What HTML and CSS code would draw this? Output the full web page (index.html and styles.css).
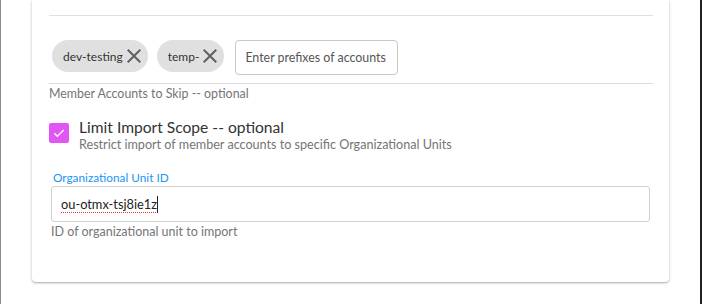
FILE: index.html
```html
<!DOCTYPE html>
<html lang="en">
<head>
    <meta charset="UTF-8">
    <meta name="viewport" content="width=device-width, initial-scale=1.0">
    <title>Import Accounts</title>
    <link rel="stylesheet" href="styles.css">
</head>
<body>
    <div class="frame">
        <div class="card">
            <div class="divider"></div>

            <!-- Cuentas a omitir -->
            <div class="chip-field">
                <div class="chips">
                    <span class="chip">dev-testing
                        <svg class="chip-close" viewBox="0 0 24 24"><path d="M19 6.41L17.59 5 12 10.59 6.41 5 5 6.41 10.59 12 5 17.59 6.41 19 12 13.41 17.59 19 19 17.59 13.41 12z"/></svg>
                    </span>
                    <span class="chip">temp-
                        <svg class="chip-close" viewBox="0 0 24 24"><path d="M19 6.41L17.59 5 12 10.59 6.41 5 5 6.41 10.59 12 5 17.59 6.41 19 12 13.41 17.59 19 19 17.59 13.41 12z"/></svg>
                    </span>
                    <input class="chip-input" type="text" placeholder="Enter prefixes of accounts">
                </div>
            </div>
            <p class="helper">Member Accounts to Skip -- optional</p>

            <!-- Limitar alcance -->
            <label class="check-row">
                <span class="checkbox">
                    <svg viewBox="0 0 24 24"><path d="M5 12.5l4.5 4.5L19 7.5" fill="none" stroke="#fff" stroke-width="2.2"/></svg>
                </span>
                <span class="check-text">
                    <span class="check-title">Limit Import Scope -- optional</span>
                    <span class="check-sub">Restrict import of member accounts to specific Organizational Units</span>
                </span>
            </label>

            <div class="field">
                <div class="field-label">Organizational Unit ID</div>
                <div class="field-box"><span class="typed">ou-otmx-tsj8ie1z</span><span class="caret"></span></div>
                <p class="helper">ID of organizational unit to import</p>
            </div>
        </div>
    </div>
</body>
</html>
```

FILE: styles.css
```css
body {
    font-family: Lato, 'Open Sans', sans-serif;
    background-color: #fff;
    color: #333;
    margin: 0;
    padding: 0;
}
.frame {
    height: 304px;
    border-left: 1px solid #8a8a8a;
    border-right: 2px solid #222;
    overflow: hidden;
}
.card {
    margin: 0 31px 0 31px;
    height: 282px;
    padding: 15px 16px 0 17px;
    box-sizing: border-box;
    background: #fff;
    border-radius: 0 0 4px 4px;
    box-shadow: 0 1px 3px rgba(0, 0, 0, 0.25), 0 1px 1px rgba(0, 0, 0, 0.12);
}
.divider {
    height: 1px;
    background: #e0e0e0;
}
.chip-field {
    margin-top: 24px;
    border-bottom: 1px solid #dcdcdc;
    padding-bottom: 8px;
}
.chips {
    display: flex;
    align-items: flex-start;
}
.chip {
    display: inline-flex;
    align-items: center;
    height: 32px;
    padding: 0 2px 0 11px;
    margin: 0 9px 0 3px;
    background: #e0e0e0;
    border-radius: 16px;
    font-size: 12px;
    color: #333;
}
.chip + .chip {
    margin-left: 0;
    margin-right: 8px;
}
.chip-close {
    width: 24px;
    height: 24px;
    margin-left: -1px;
    fill: #5f5f5f;
}
.chip-input {
    width: 163px;
    height: 35px;
    margin-left: 3px;
    box-sizing: border-box;
    padding: 0 9px;
    border: 1px solid #c8c8c8;
    border-radius: 4px;
    font-family: inherit;
    font-size: 12.4px;
    color: #333;
}
.chip-input::placeholder {
    color: #555;
}
.helper {
    margin: 0;
    padding-top: 2px;
    font-size: 12.4px;
    line-height: 16px;
    color: #757575;
}
.check-row {
    display: flex;
    align-items: flex-start;
    margin-top: 15px;
}
.checkbox {
    width: 20px;
    height: 20px;
    margin-top: 6px;
    border-radius: 2px;
    background: #e255f4;
    display: flex;
    align-items: center;
    justify-content: center;
}
.checkbox svg {
    width: 16px;
    height: 16px;
}
.check-text {
    display: flex;
    flex-direction: column;
    margin-left: 10px;
}
.check-title {
    font-size: 15.6px;
    line-height: 20px;
    color: #333;
}
.check-sub {
    font-size: 12.6px;
    line-height: 15px;
    color: #757575;
}
.field {
    margin-top: 19px;
    padding-left: 2px;
    padding-right: 3px;
}
.field-label {
    padding-left: 2px;
    font-size: 11.8px;
    line-height: 14px;
    color: #2196f3;
}
.field-box {
    margin-top: 1px;
    height: 36px;
    box-sizing: border-box;
    border: 1px solid #cfcfcf;
    border-radius: 3px;
    padding: 0 9px;
    display: flex;
    align-items: center;
    font-size: 12.8px;
    color: #222;
}
.field .helper {
    font-size: 12.5px;
}
.typed {
    text-decoration: underline dotted #e53935;
    text-decoration-thickness: 1px;
    text-underline-offset: 3px;
}
.caret {
    width: 1px;
    height: 17px;
    background: #222;
}
```
